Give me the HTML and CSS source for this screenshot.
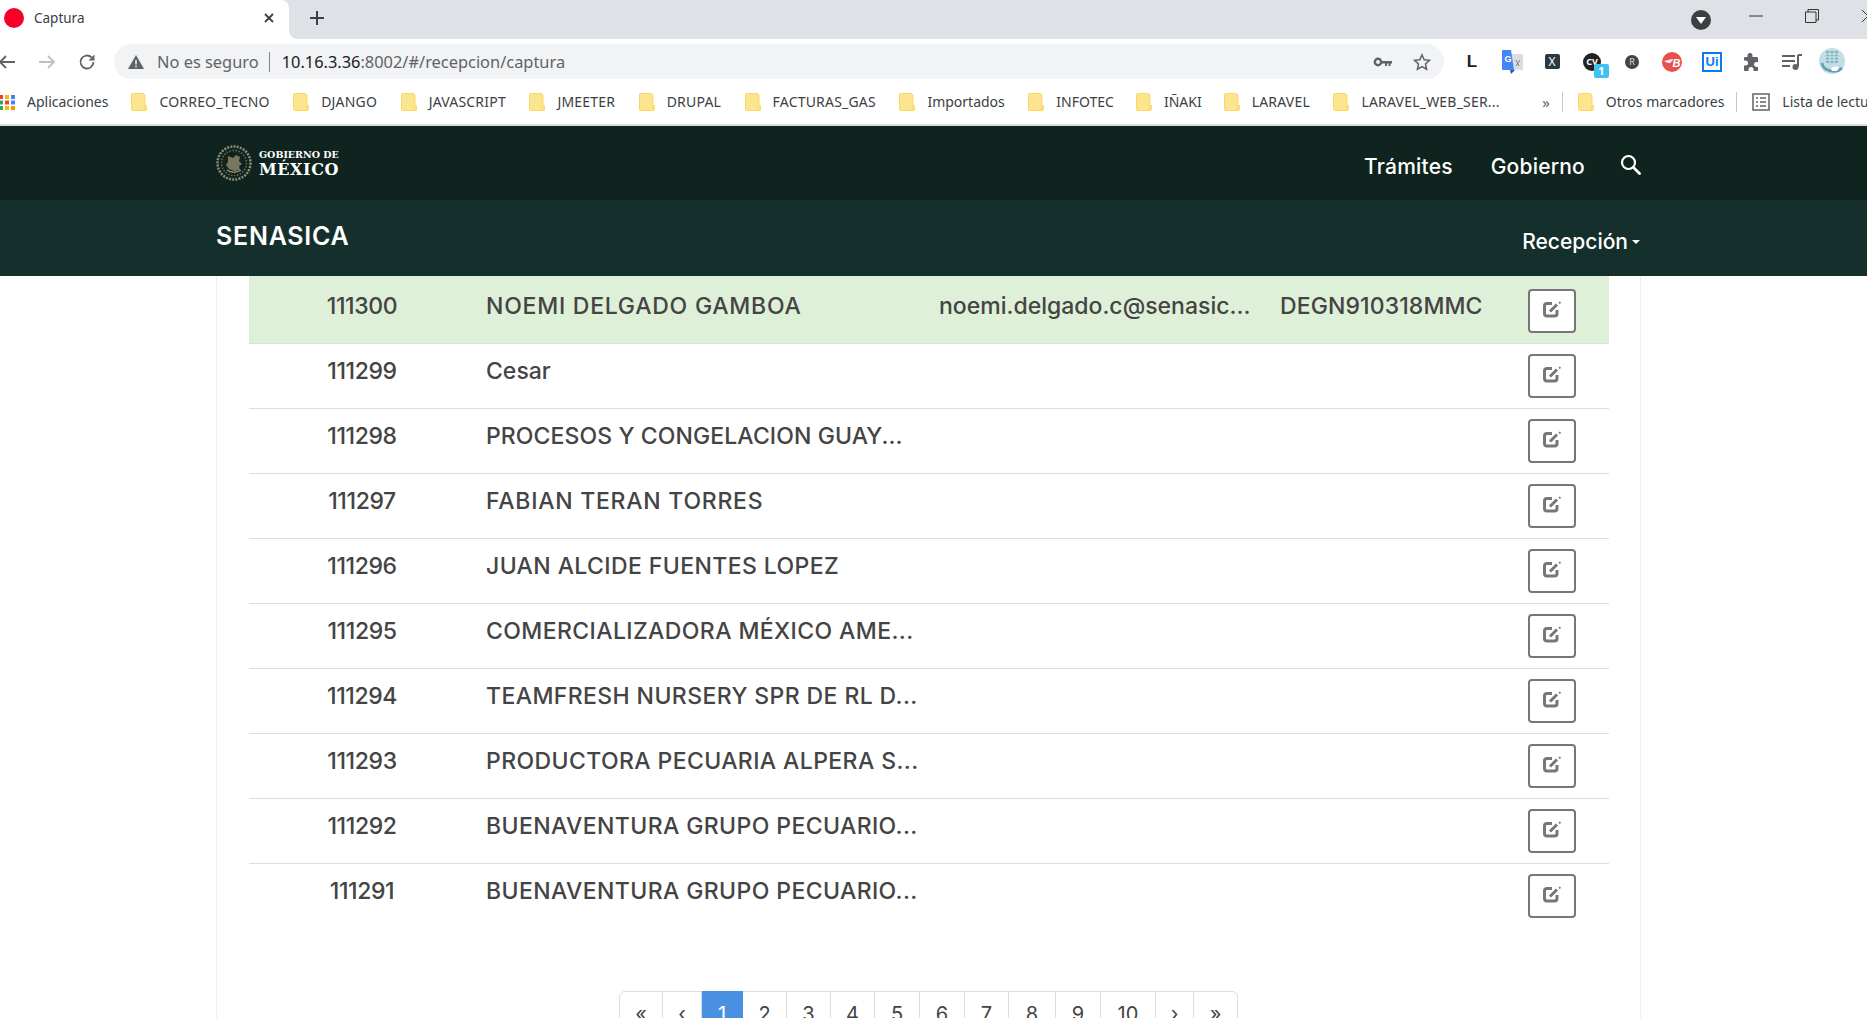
FILE: index.html
```html
<!DOCTYPE html>
<html lang="es">
  <head>
    <meta charset="UTF-8" />
    <title>Captura</title>
    <link rel="stylesheet" href="styles.css">
  </head>
  <body>
    <svg class="defs" width="0" height="0">
      <symbol id="folder" viewBox="0 0 16 18">
        <path d="M1.500 .5h11l1.500 1.500v10.500h1.500v4a1 1 0 0 1-1 1H1.500a1 1 0 0 1-1-1V1.500a1 1 0 0 1 1-1z" fill="#fde58f" stroke="#fbd766"/>
        <path d="M13.500 12.500v4.500" stroke="#fbd766" fill="none"/>
      </symbol>
      <symbol id="edit" viewBox="0 0 20 18">
        <path d="M10 3.500H5A2.500 2.500 0 0 0 2.500 6v7.500A2.500 2.500 0 0 0 5 16h7.500a2.500 2.500 0 0 0 2.500-2.500V10" fill="none" stroke="#777" stroke-width="3"/>
        <path d="M8 11.500 15 4.500" stroke="#777" stroke-width="3"/>
        <path d="M16.500 3l1-1.500 1.500 1-1 1.500z" fill="#777"/>
      </symbol>
    </svg>

    <div class="tabstrip">
      <div class="tab">
        <span class="favicon"></span>
        <span class="tab-title">Captura</span>
        <svg class="tab-close" width="12" height="12" viewBox="0 0 12 12"><path d="M2 2l8 8M10 2l-8 8" stroke="#3c4043" stroke-width="1.800"/></svg>
      </div>
      <svg class="new-tab" width="16" height="16" viewBox="0 0 16 16"><path d="M8 1v14M1 8h14" stroke="#3c4043" stroke-width="2"/></svg>
      <div class="window-controls">
        <span class="profile-menu"></span>
        <span class="win-btn"><svg width="14" height="2" viewBox="0 0 14 2"><path d="M0 1h14" stroke="#333"/></svg></span>
        <span class="win-btn"><svg width="14" height="14" viewBox="0 0 14 14"><path d="M3 3V.5h10.500V11H11M.5 3h10.500v10.500H.5z" fill="none" stroke="#333"/></svg></span>
        <span class="win-btn"><svg width="14" height="14" viewBox="0 0 14 14"><path d="M1 1l12 12M13 1L1 13" stroke="#333"/></svg></span>
      </div>
    </div>

    <div class="toolbar">
      <span class="nav-btn"><svg width="18" height="16" viewBox="0 0 18 16"><path d="M17 8H2M8 2L2 8l6 6" fill="none" stroke="#5f6368" stroke-width="1.800"/></svg></span>
      <span class="nav-btn"><svg width="18" height="16" viewBox="0 0 18 16"><path d="M1 8h15M10 2l6 6-6 6" fill="none" stroke="#bdc1c6" stroke-width="1.800"/></svg></span>
      <span class="nav-btn"><svg width="18" height="18" viewBox="0 0 18 18"><path d="M15.500 9a6.500 6.500 0 1 1-1.900-4.600" fill="none" stroke="#5f6368" stroke-width="1.800"/><path d="M16.500 1.500v6h-6z" fill="#5f6368"/></svg></span>
      <div class="omnibox">
        <svg class="warn" width="18" height="16" viewBox="0 0 18 16"><path d="M9 1l8 14H1z" fill="#5f6368"/><path d="M9 6v4.500M9 11.800v1.500" stroke="#f1f3f4" stroke-width="1.500"/></svg>
        <span class="insecure">No es seguro</span>
        <span class="omni-sep"></span>
        <span class="url"><b>10.16.3.36</b>:8002/#/recepcion/captura</span>
        <svg class="key" width="20" height="10" viewBox="0 0 20 10"><circle cx="5" cy="5" r="3.200" fill="none" stroke="#5f6368" stroke-width="2.400"/><path d="M8 4h11v2.500h-1.500V9h-2V6.500h-1.500V9h-2V6.500H8z" fill="#5f6368"/></svg>
        <svg class="star" width="18" height="18" viewBox="0 0 18 18"><path d="M9 1.800l2.200 4.900 5.300.6-4 3.600 1.100 5.300L9 13.500l-4.600 2.700 1.100-5.300-4-3.600 5.300-.6z" fill="none" stroke="#5f6368" stroke-width="1.500"/></svg>
      </div>
      <div class="extensions">
        <span class="ext ext-l">L</span>
        <span class="ext"><svg width="21" height="24" viewBox="0 0 21 24"><path d="M9 4h12v16H9z" fill="#dadce0"/><path d="M14 10l3 6M18 10l-4 6" stroke="#80868b"/><path d="M1 0h8l3 20H1a1 1 0 0 1-1-1V1a1 1 0 0 1 1-1z" fill="#4285f4"/><path d="M8 20h5l-4 4z" fill="#3b53b8"/><text x="2.500" y="12" class="ext-g">G</text></svg></span>
        <span class="ext"><span class="ext-x">X</span></span>
        <span class="ext"><span class="cv-mark">CV</span><span class="cv-badge">1</span></span>
        <span class="ext"><span class="ext-r">R</span></span>
        <span class="ext"><svg width="20" height="20" viewBox="0 0 20 20"><circle cx="10" cy="10" r="10" fill="#e8514f"/><path d="M2 9l9-2-1 2.500h-2l1 1.500H6z" fill="#fff"/><text x="10.500" y="14.500" class="ext-b">B</text></svg></span>
        <span class="ext"><span class="ext-ui">Ui</span></span>
        <span class="ext"><svg width="18" height="18" viewBox="0 0 18 18"><path d="M7 0a2.500 2.500 0 0 1 2.500 2.500V4H14a1 1 0 0 1 1 1v4h-1.500a2.500 2.500 0 0 0 0 5H15v3a1 1 0 0 1-1 1h-3.500v-1.500a2.500 2.500 0 0 0-5 0V18H2a1 1 0 0 1-1-1v-4.500h1.500a2.500 2.500 0 0 0 0-5H1V5a1 1 0 0 1 1-1h2.500V2.500A2.500 2.500 0 0 1 7 0z" fill="#5f6368"/></svg></span>
        <span class="ext"><svg width="20" height="18" viewBox="0 0 20 18"><path d="M0 3h13M0 8h13M0 13h8" stroke="#5f6368" stroke-width="2"/><path d="M16 2v11.500" stroke="#5f6368" stroke-width="2"/><path d="M16 1h4v2h-4z" fill="#5f6368"/><circle cx="13.500" cy="14" r="3" fill="#5f6368"/></svg></span>
        <span class="ext"><svg width="26" height="27" viewBox="0 0 26 27"><circle cx="13" cy="13" r="13" fill="#c3dde4"/><path d="M7 3h12v12H7z" fill="#7fb4c4"/><path d="M7 6h12M7 9h12M7 12h12M11 3v12M15 3v12" stroke="#d9ecf0"/><path d="M3 15c1 8 14 11 20 5" fill="none" stroke="#5e9fb3" stroke-width="2.500"/><path d="M12 21c2-3 6-3 8-1l-2 3h-5z" fill="#fff"/></svg></span>
      </div>
    </div>

    <div class="bookmarks">
      <svg class="apps" width="16" height="16" viewBox="0 0 16 16">
        <path d="M0 1h4v4H0z" fill="#ea4335"/><path d="M6 1h4v4H6z" fill="#fbbc04"/><path d="M12 1h4v4h-4z" fill="#4285f4"/>
        <path d="M0 6.500h4v4H0z" fill="#34a853"/><path d="M6 6.500h4v4H6z" fill="#ea4335"/><path d="M12 6.500h4v4h-4z" fill="#4285f4"/>
        <path d="M0 12h4v4H0z" fill="#34a853"/><path d="M6 12h4v4H6z" fill="#fbbc04"/><path d="M12 12h4v4h-4z" fill="#f29900"/>
      </svg>
      <span class="bm-apps">Aplicaciones</span>
      <span class="bm"><svg class="folder"><use href="#folder"/></svg>CORREO_TECNO</span>
      <span class="bm"><svg class="folder"><use href="#folder"/></svg>DJANGO</span>
      <span class="bm"><svg class="folder"><use href="#folder"/></svg>JAVASCRIPT</span>
      <span class="bm"><svg class="folder"><use href="#folder"/></svg>JMEETER</span>
      <span class="bm"><svg class="folder"><use href="#folder"/></svg>DRUPAL</span>
      <span class="bm"><svg class="folder"><use href="#folder"/></svg>FACTURAS_GAS</span>
      <span class="bm bm-plain"><svg class="folder"><use href="#folder"/></svg>Importados</span>
      <span class="bm bm-narrow"><svg class="folder"><use href="#folder"/></svg>INFOTEC</span>
      <span class="bm bm-narrow"><svg class="folder"><use href="#folder"/></svg>IÑAKI</span>
      <span class="bm"><svg class="folder"><use href="#folder"/></svg>LARAVEL</span>
      <span class="bm"><svg class="folder"><use href="#folder"/></svg>LARAVEL_WEB_SER...</span>
      <span class="bm-more">»</span>
      <span class="bm-sep"></span>
      <span class="bm bm-plain bm-other"><svg class="folder"><use href="#folder"/></svg>Otros marcadores</span>
      <span class="bm-sep"></span>
      <span class="bm bm-plain bm-reading"><svg class="reading" width="18" height="18" viewBox="0 0 18 18"><path d="M1 1h16v16H1z" fill="none" stroke="#5f6368" stroke-width="1.500"/><path d="M4 5h2M8 5h6M4 9h2M8 9h6M4 13h2M8 13h6" stroke="#5f6368" stroke-width="1.500"/></svg>Lista de lectura</span>
    </div>

    <header class="site-header">
      <div class="gob-bar">
        <div class="gob-logo">
          <svg class="seal" width="36" height="36" viewBox="0 0 36 36">
            <circle cx="18" cy="18" r="16.500" fill="none" stroke="#8f8e75" stroke-width="2.500" stroke-dasharray="2 1.200"/>
            <circle cx="18" cy="18" r="12.500" fill="none" stroke="#6c6c58" stroke-width="1.500" stroke-dasharray="1.500 1.500"/>
            <path d="M12 11l5 2 3-3 4 2-1 4 3 3-3 2 1 4-6 1-5-2-3-4 2-3z" fill="#77775f"/>
            <path d="M11 25c4 3 10 3 14 0" fill="none" stroke="#8f8e75" stroke-width="1.500"/>
          </svg>
          <div class="gob-text">
            <span class="gob-small">GOBIERNO DE</span>
            <span class="gob-big">MÉXICO</span>
          </div>
        </div>
        <nav class="gob-nav">
          <a>Trámites</a>
          <a>Gobierno</a>
          <svg class="search" width="21" height="21" viewBox="0 0 21 21"><circle cx="8.500" cy="8.500" r="6.500" fill="none" stroke="#fff" stroke-width="2.200"/><path d="M13.500 13.500l6 6" stroke="#fff" stroke-width="2.800" stroke-linecap="round"/></svg>
        </nav>
      </div>
      <div class="sub-bar">
        <span class="brand">SENASICA</span>
        <a class="sub-link">Recepción<span class="caret"></span></a>
      </div>
    </header>

    <main class="content">
      <table class="records">
        <colgroup>
          <col class="c-id"><col class="c-name"><col class="c-mail"><col class="c-rfc"><col class="c-act">
        </colgroup>
        <tbody>
          <tr class="selected">
            <td class="id">111300</td><td class="name wide">NOEMI DELGADO GAMBOA</td><td>noemi.delgado.c@senasic...</td><td class="rfc">DEGN910318MMC</td>
            <td><button class="edit-btn"><svg width="20" height="18"><use href="#edit"/></svg></button></td>
          </tr>
          <tr>
            <td class="id">111299</td><td>Cesar</td><td></td><td></td>
            <td><button class="edit-btn"><svg width="20" height="18"><use href="#edit"/></svg></button></td>
          </tr>
          <tr>
            <td class="id">111298</td><td class="name tight">PROCESOS Y CONGELACION GUAY...</td><td></td><td></td>
            <td><button class="edit-btn"><svg width="20" height="18"><use href="#edit"/></svg></button></td>
          </tr>
          <tr>
            <td class="id">111297</td><td class="name wide">FABIAN TERAN TORRES</td><td></td><td></td>
            <td><button class="edit-btn"><svg width="20" height="18"><use href="#edit"/></svg></button></td>
          </tr>
          <tr>
            <td class="id">111296</td><td class="name">JUAN ALCIDE FUENTES LOPEZ</td><td></td><td></td>
            <td><button class="edit-btn"><svg width="20" height="18"><use href="#edit"/></svg></button></td>
          </tr>
          <tr>
            <td class="id">111295</td><td class="name">COMERCIALIZADORA MÉXICO AME...</td><td></td><td></td>
            <td><button class="edit-btn"><svg width="20" height="18"><use href="#edit"/></svg></button></td>
          </tr>
          <tr>
            <td class="id">111294</td><td class="name">TEAMFRESH NURSERY SPR DE RL D...</td><td></td><td></td>
            <td><button class="edit-btn"><svg width="20" height="18"><use href="#edit"/></svg></button></td>
          </tr>
          <tr>
            <td class="id">111293</td><td class="name">PRODUCTORA PECUARIA ALPERA S...</td><td></td><td></td>
            <td><button class="edit-btn"><svg width="20" height="18"><use href="#edit"/></svg></button></td>
          </tr>
          <tr>
            <td class="id">111292</td><td class="name">BUENAVENTURA GRUPO PECUARIO...</td><td></td><td></td>
            <td><button class="edit-btn"><svg width="20" height="18"><use href="#edit"/></svg></button></td>
          </tr>
          <tr class="last">
            <td class="id">111291</td><td class="name">BUENAVENTURA GRUPO PECUARIO...</td><td></td><td></td>
            <td><button class="edit-btn"><svg width="20" height="18"><use href="#edit"/></svg></button></td>
          </tr>
        </tbody>
      </table>

      <ul class="pagination">
        <li>«</li><li>‹</li><li class="active">1</li><li>2</li><li>3</li><li>4</li><li>5</li>
        <li>6</li><li>7</li><li>8</li><li>9</li><li>10</li><li>›</li><li>»</li>
      </ul>
    </main>
  </body>
</html>
```

FILE: styles.css
```css
* {
  box-sizing: border-box;
}
html,
body {
  margin: 0;
  height: 100%;
  overflow: hidden;
  background: #fff;
}
body {
  font-family: "Noto Sans", sans-serif;
  color: #3c4043;
}
.defs {
  display: block;
  height: 0;
}

/* browser chrome */
.tabstrip {
  display: flex;
  align-items: center;
  height: 39px;
  background: #dee1e6;
}
.tab {
  position: relative;
  display: flex;
  align-items: center;
  width: 289px;
  height: 39px;
  padding: 0 14px 3px 4px;
  background: #fff;
  border-top-right-radius: 8px;
}
.tab::after {
  content: "";
  position: absolute;
  right: -8px;
  bottom: 0;
  width: 8px;
  height: 8px;
  background: radial-gradient(circle at 100% 0, #dee1e6 7.5px, #fff 8px);
}
.favicon {
  width: 20px;
  height: 20px;
  border-radius: 50%;
  background: #f5002a;
}
.tab-title {
  flex: 1;
  margin-left: 10px;
  font-size: 13.500px;
}
.new-tab {
  margin-left: 20px;
  margin-bottom: 3px;
}
.window-controls {
  display: flex;
  align-items: center;
  margin-left: auto;
  margin-right: -29px;
}
.profile-menu {
  position: relative;
  width: 20px;
  height: 20px;
  margin-right: 17px;
  border-radius: 50%;
  background: #3c4043;
}
.profile-menu::after {
  content: "";
  position: absolute;
  left: 5px;
  top: 7px;
  border: 5px solid transparent;
  border-top: 7px solid #fff;
  border-bottom: 0;
}
.win-btn {
  display: flex;
  justify-content: center;
  width: 56px;
  margin-top: -7px;
}

.toolbar {
  display: flex;
  align-items: flex-end;
  height: 40px;
  background: #fff;
}
.nav-btn {
  display: flex;
  align-items: center;
  justify-content: center;
  width: 40px;
  height: 35px;
}
.nav-btn:first-child {
  margin-left: -13px;
}
.omnibox {
  display: flex;
  align-items: center;
  flex: 1;
  height: 35px;
  margin-left: 7px;
  padding: 0 13px 0 13px;
  background: #f1f3f4;
  border-radius: 18px;
}
.insecure {
  margin-left: 12px;
  font-size: 16.400px;
  color: #5f6368;
}
.omni-sep {
  width: 1px;
  height: 20px;
  margin: 0 12px 0 10px;
  background: #80868b;
}
.url {
  flex: 1;
  font-size: 16.400px;
  color: #5f6368;
}
.url b {
  font-weight: 400;
  color: #202124;
}
.star {
  margin-left: 20px;
}
.extensions {
  display: flex;
  margin-left: 8px;
  margin-right: 15px;
}
.ext {
  position: relative;
  display: flex;
  align-items: center;
  justify-content: center;
  width: 40px;
  height: 35px;
}
.ext-l {
  font-family: "Liberation Sans", sans-serif;
  font-size: 17px;
  font-weight: 700;
  color: #202124;
}
.ext-g {
  font-family: "Liberation Sans", sans-serif;
  font-size: 9px;
  font-weight: 700;
  fill: #fff;
}
.ext-x {
  width: 15px;
  height: 15px;
  border-radius: 2px;
  background: #2b3a42;
  color: #fff;
  font-size: 12px;
  line-height: 15px;
  text-align: center;
}
.cv-mark {
  width: 18px;
  height: 18px;
  border-radius: 50%;
  background: #222;
  color: #fff;
  font-size: 9px;
  font-weight: 700;
  line-height: 18px;
  text-align: center;
}
.cv-badge {
  position: absolute;
  left: 22px;
  top: 20px;
  width: 15px;
  height: 14px;
  border-radius: 2px;
  background: #3fc3ee;
  color: #fff;
  font-size: 11px;
  font-weight: 700;
  line-height: 14px;
  text-align: center;
}
.ext-r {
  width: 14px;
  height: 14px;
  border-radius: 50%;
  background: #444;
  color: #ddd;
  font-size: 9px;
  line-height: 14px;
  text-align: center;
}
.ext-b {
  font-family: "Liberation Sans", sans-serif;
  font-size: 11px;
  font-style: italic;
  font-weight: 700;
  fill: #fff;
}
.ext-ui {
  width: 20px;
  height: 20px;
  border: 2px solid #0a7cf0;
  color: #0a7cf0;
  font-family: "Liberation Sans", sans-serif;
  font-size: 13px;
  font-weight: 700;
  line-height: 16px;
  text-align: center;
}

.bookmarks {
  display: flex;
  align-items: center;
  height: 47px;
  border-bottom: 2px solid #dcdcdc;
  background: #fff;
  font-size: 14px;
  color: #3c4043;
  white-space: nowrap;
}
.apps {
  flex: none;
  margin-left: -1px;
}
.bm-apps {
  margin-left: 12px;
  margin-right: 23px;
}
.bm {
  display: flex;
  align-items: center;
  margin-right: 23.500px;
  letter-spacing: .2px;
}
.bm-plain {
  letter-spacing: 0;
}
.bm-narrow {
  margin-right: 22px;
  letter-spacing: 0;
}
.folder {
  flex: none;
  width: 16px;
  height: 18px;
  margin-right: 12px;
}
.bm-more {
  margin-left: 19px;
  font-size: 15px;
  color: #5f6368;
}
.bm-sep {
  flex: none;
  width: 1px;
  height: 20px;
  margin: 0 15px 0 12px;
  background: #c6c8cb;
}
.bm-other {
  margin-right: 0;
}
.bm-reading svg {
  margin-right: 12px;
}

/* site header */
.site-header {
  color: #fff;
}
.gob-bar {
  display: flex;
  align-items: center;
  justify-content: space-between;
  height: 74px;
  padding: 0 226px 0 216px;
  background: #0f241e;
}
.gob-logo {
  display: flex;
  align-items: center;
}
.gob-text {
  display: flex;
  flex-direction: column;
  margin-left: 7px;
  padding-top: 2px;
  font-family: "DejaVu Serif", serif;
  font-weight: 700;
}
.gob-small {
  font-size: 9.500px;
  line-height: 11px;
}
.gob-big {
  font-size: 16px;
  letter-spacing: .6px;
  line-height: 19px;
}
.gob-nav {
  display: flex;
  align-items: center;
  padding-top: 6px;
  font-family: Inter, sans-serif;
  font-size: 21px;
  font-weight: 500;
  letter-spacing: .2px;
}
.gob-nav a {
  margin-right: 38px;
}
.gob-nav a:last-of-type {
  margin-right: 35px;
}
.search {
  margin-top: -4px;
}
.sub-bar {
  display: flex;
  align-items: center;
  justify-content: space-between;
  height: 76px;
  padding: 0 227px 0 216px;
  background: #15302c;
  font-family: Inter, sans-serif;
}
.brand {
  margin-top: -4px;
  font-size: 25px;
  font-weight: 600;
  letter-spacing: .75px;
}
.sub-link {
  display: flex;
  align-items: center;
  margin-top: 7px;
  font-size: 21px;
  font-weight: 500;
}
.caret {
  margin-left: 4px;
  border: 4.500px solid transparent;
  border-top: 4.500px solid #fff;
  border-bottom: 0;
}

/* listado */
.content {
  width: 1425px;
  height: 760px;
  margin-left: 216px;
  padding: 0 32px;
  border-left: 1px solid #eee;
  border-right: 1px solid #eee;
  font-family: Inter, sans-serif;
  color: #444;
}
.records {
  width: 1360px;
  table-layout: fixed;
  border-collapse: collapse;
  font-size: 23px;
  font-weight: 500;
}
.c-id {
  width: 226px;
}
.c-name {
  width: 453px;
}
.c-mail {
  width: 340px;
}
.c-rfc {
  width: 249px;
}
.c-act {
  width: 92px;
}
.records td {
  height: 65px;
  padding: 10px 11px;
  border-bottom: 1px solid #ddd;
  line-height: 35px;
  vertical-align: top;
  white-space: nowrap;
}
.records .last td {
  border-bottom: 0;
}
.records td.id {
  letter-spacing: -.4px;
  text-align: center;
}
.records td.name {
  letter-spacing: .4px;
}
.records td.wide {
  letter-spacing: .75px;
}
.records td.tight {
  letter-spacing: .1px;
}
.records td.rfc {
  padding-left: 12px;
  letter-spacing: .1px;
}
.selected td {
  background: #dff0d8;
}
.records .selected td {
  height: 67px;
  padding-top: 13px;
  padding-bottom: 9px;
}
.edit-btn {
  display: flex;
  align-items: center;
  justify-content: center;
  width: 48px;
  height: 44px;
  padding: 0 0 4px;
  background: #fff;
  border: 2px solid #777;
  border-radius: 4px;
}
.pagination {
  display: grid;
  grid-template-columns: 44px 39px 41px 44px 44px 44px 45px 45px 44px 47px 45px 55px 38px 44px;
  width: 619px;
  margin: 63px 0 0 370px;
  padding: 0;
  list-style: none;
  font-size: 20px;
}
.pagination li {
  height: 50px;
  padding-top: 10px;
  border: 1px solid #ddd;
  border-left: 0;
  text-align: center;
}
.pagination li:first-child {
  border-left: 1px solid #ddd;
  border-top-left-radius: 6px;
}
.pagination li:last-child {
  border-top-right-radius: 6px;
}
.pagination .active {
  background: #4a90e2;
  border-color: #4a90e2;
  color: #fff;
}
```
